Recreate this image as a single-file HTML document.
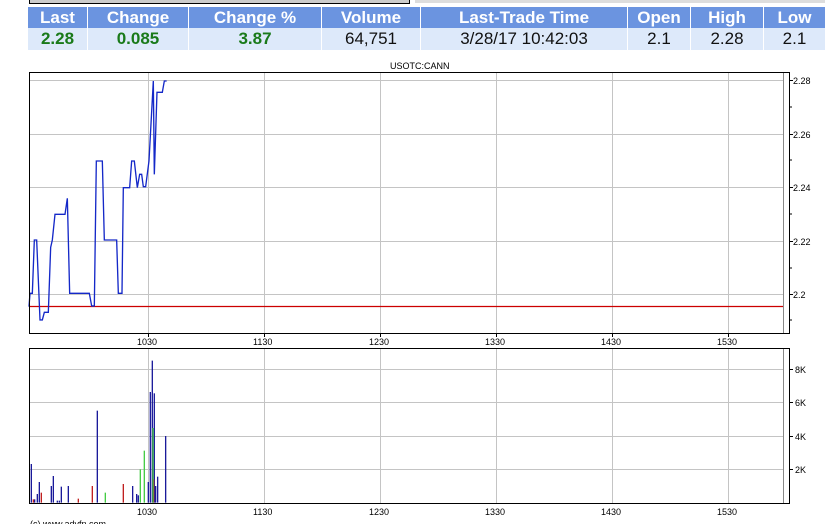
<!DOCTYPE html>
<html><head><meta charset="utf-8"><style>
body{margin:0;background:#fff;width:827px;height:524px;overflow:hidden;position:relative;font-family:"Liberation Sans",Arial,sans-serif}
.a{position:absolute}
table{position:absolute;left:27px;top:7px;border-collapse:collapse;width:798px;table-layout:fixed}
td{text-align:center;padding:0;border-left:1px solid #fff;border-right:1px solid #fff;overflow:hidden;white-space:nowrap}
tr.h td{background:#6b94e0;color:#fff;font-weight:bold;font-size:17px;height:21px}
tr.d td{background:#dde9fa;font-size:17px;height:22px;color:#111}
tr.d td.g{color:#1a7a1a;font-weight:bold}
</style></head><body>
<div class="a" style="left:29px;top:-1px;width:379px;height:3px;background:#ccc;border:1px solid #000"></div>
<div class="a" style="left:415px;top:0;width:410px;height:3px;background:#ddd"></div>
<table>
<colgroup><col style="width:60px"><col style="width:101px"><col style="width:133px"><col style="width:99px"><col style="width:207px"><col style="width:63px"><col style="width:73px"><col style="width:62px"></colgroup>
<tr class="h"><td>Last</td><td>Change</td><td>Change %</td><td>Volume</td><td>Last-Trade Time</td><td>Open</td><td>High</td><td>Low</td></tr>
<tr class="d"><td class="g">2.28</td><td class="g">0.085</td><td class="g">3.87</td><td>64,751</td><td>3/28/17 10:42:03</td><td>2.1</td><td>2.28</td><td>2.1</td></tr>
</table>
<svg class="a" style="left:0;top:0" width="827" height="524" font-family="Liberation Sans,Arial,sans-serif" font-size="9">
<text x="390" y="69" font-size="9">USOTC:CANN</text>
<g stroke="#c4c4c4" stroke-width="1">
<line x1="148.5" y1="72" x2="148.5" y2="333"/><line x1="264.5" y1="72" x2="264.5" y2="333"/><line x1="380.5" y1="72" x2="380.5" y2="333"/><line x1="496.5" y1="72" x2="496.5" y2="333"/><line x1="612.5" y1="72" x2="612.5" y2="333"/><line x1="728.5" y1="72" x2="728.5" y2="333"/>
<line x1="30" y1="80.5" x2="783" y2="80.5"/><line x1="30" y1="134.5" x2="783" y2="134.5"/><line x1="30" y1="187.5" x2="783" y2="187.5"/><line x1="30" y1="241.5" x2="783" y2="241.5"/><line x1="30" y1="294.5" x2="783" y2="294.5"/>
<line x1="148.5" y1="348" x2="148.5" y2="503"/><line x1="264.5" y1="348" x2="264.5" y2="503"/><line x1="380.5" y1="348" x2="380.5" y2="503"/><line x1="496.5" y1="348" x2="496.5" y2="503"/><line x1="612.5" y1="348" x2="612.5" y2="503"/><line x1="728.5" y1="348" x2="728.5" y2="503"/>
<line x1="30" y1="369.5" x2="783" y2="369.5"/><line x1="30" y1="402.5" x2="783" y2="402.5"/><line x1="30" y1="436.5" x2="783" y2="436.5"/><line x1="30" y1="469.5" x2="783" y2="469.5"/>
</g>
<line x1="783.5" y1="72" x2="783.5" y2="333" stroke="#888"/>
<line x1="783.5" y1="348" x2="783.5" y2="503" stroke="#888"/>
<line x1="30" y1="306.5" x2="783" y2="306.5" stroke="#c00" stroke-width="1.2"/>
<g transform="translate(25,60) scale(0.3333)"><polyline fill="none" stroke="#1428c8" stroke-width="4" points="12,740 15,700 22,700 28,540 35,540 45,780 52,780 58,757 70,757 77,562 82,540 90,463 120,463 127,415 134,700 193,700 200,738 208,738 214,303 232,303 238,540 275,540 280,700 291,700 295,383 314,383 320,303 328,303 337,383 344,343 350,343 355,380 362,380 372,303 385,63 388,343 396,97 412,97 418,63 425,63"/></g>
<g transform="translate(0,340) scale(0.3333)" stroke-width="4">
<g stroke="#1a1a9a"><line x1="94" y1="488" x2="94" y2="372"/><line x1="104" y1="488" x2="104" y2="478"/><line x1="112" y1="488" x2="112" y2="462"/><line x1="118" y1="488" x2="118" y2="426"/><line x1="154" y1="488" x2="154" y2="438"/><line x1="160" y1="488" x2="160" y2="408"/><line x1="172" y1="488" x2="172" y2="482"/><line x1="178" y1="488" x2="178" y2="482"/><line x1="184" y1="488" x2="184" y2="440"/><line x1="205" y1="488" x2="205" y2="438"/><line x1="292" y1="488" x2="292" y2="212"/><line x1="398" y1="488" x2="398" y2="438"/><line x1="410" y1="488" x2="410" y2="462"/><line x1="415" y1="488" x2="415" y2="466"/><line x1="445" y1="488" x2="445" y2="426"/><line x1="451" y1="488" x2="451" y2="156"/><line x1="457" y1="488" x2="457" y2="62"/><line x1="463" y1="488" x2="463" y2="160"/><line x1="467" y1="488" x2="467" y2="438"/><line x1="473" y1="488" x2="473" y2="410"/><line x1="497" y1="488" x2="497" y2="288"/></g>
<g stroke="#c02020"><line x1="100" y1="488" x2="100" y2="478"/><line x1="124" y1="488" x2="124" y2="458"/><line x1="235" y1="488" x2="235" y2="476"/><line x1="277" y1="488" x2="277" y2="438"/><line x1="370" y1="488" x2="370" y2="432"/><line x1="461" y1="488" x2="461" y2="418"/></g>
<g stroke="#44cc44"><line x1="316" y1="488" x2="316" y2="458"/><line x1="421" y1="488" x2="421" y2="388"/><line x1="433" y1="488" x2="433" y2="332"/><line x1="459" y1="488" x2="459" y2="264"/></g>
</g>
<rect x="29.5" y="72.5" width="760" height="261" fill="none" stroke="#000"/>
<rect x="29.5" y="348.5" width="760" height="155" fill="none" stroke="#000"/>
<g stroke="#000"><line x1="789" y1="107" x2="792" y2="107"/><line x1="789" y1="80.5" x2="793" y2="80.5"/><line x1="789" y1="134.5" x2="793" y2="134.5"/><line x1="789" y1="160" x2="792" y2="160"/><line x1="789" y1="187.5" x2="793" y2="187.5"/><line x1="789" y1="214" x2="792" y2="214"/><line x1="789" y1="241.5" x2="793" y2="241.5"/><line x1="789" y1="268" x2="792" y2="268"/><line x1="789" y1="294.5" x2="793" y2="294.5"/><line x1="789" y1="320" x2="792" y2="320"/>
<line x1="789" y1="369.5" x2="793" y2="369.5"/><line x1="789" y1="402.5" x2="793" y2="402.5"/><line x1="789" y1="436.5" x2="793" y2="436.5"/><line x1="789" y1="469.5" x2="793" y2="469.5"/>
<line x1="148.5" y1="333" x2="148.5" y2="337"/><line x1="264.5" y1="333" x2="264.5" y2="337"/><line x1="380.5" y1="333" x2="380.5" y2="337"/><line x1="496.5" y1="333" x2="496.5" y2="337"/><line x1="612.5" y1="333" x2="612.5" y2="337"/><line x1="728.5" y1="333" x2="728.5" y2="337"/></g>
<g fill="#000"><text x="793" y="84">2.28</text><text x="793" y="138">2.26</text><text x="793" y="191">2.24</text><text x="793" y="245">2.22</text><text x="793" y="298">2.2</text>
<text x="795" y="373">8K</text><text x="795" y="406">6K</text><text x="795" y="440">4K</text><text x="795" y="473">2K</text>
<text x="137" y="345">1030</text><text x="253" y="345">1130</text><text x="369" y="345">1230</text><text x="485" y="345">1330</text><text x="601" y="345">1430</text><text x="717" y="345">1530</text>
<text x="137" y="515">1030</text><text x="253" y="515">1130</text><text x="369" y="515">1230</text><text x="485" y="515">1330</text><text x="601" y="515">1430</text><text x="717" y="515">1530</text>
<text x="30" y="527">(c) www.advfn.com</text></g>
</svg>
</body></html>
